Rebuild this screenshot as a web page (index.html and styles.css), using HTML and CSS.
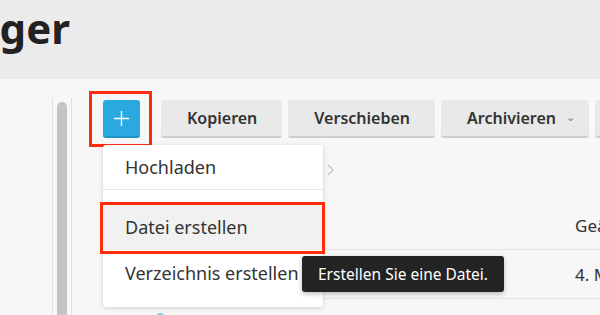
FILE: index.html
```html
<!DOCTYPE html>
<html lang="de">
<head>
    <meta charset="UTF-8">
    <title>Dateimanager</title>
    <link rel="stylesheet" href="styles.css">
</head>
<body>
    <header class="page-header">
        <div class="title-clip">
            <h1>File Manager</h1>
        </div>
    </header>

    <main class="page-main">
        <div class="gutter"></div>
        <div class="scroll-track">
            <div class="scroll-thumb"></div>
        </div>

        <section class="content">
            <div class="toolbar">
                <button class="btn-add" aria-label="Neu">
                    <svg width="17" height="17" viewBox="0 0 17 17">
                        <path d="M8.5 1v15M1 8.5h15" stroke="#fff" stroke-width="1.4" fill="none"/>
                    </svg>
                </button>
                <button class="btn">Kopieren</button>
                <button class="btn">Verschieben</button>
                <button class="btn btn-caret">Archivieren <span class="caret">&#8964;</span></button>
                <button class="btn">Löschen</button>
            </div>

            <nav class="breadcrumb">
                <span class="crumb">Meine Dateien</span>
                <svg class="chevron" width="7" height="12" viewBox="0 0 7 12">
                    <path d="M1 1l5 5-5 5" stroke="#c4c4c4" stroke-width="1.2" fill="none"/>
                </svg>
            </nav>

            <div class="file-table">
                <div class="row head">
                    <div class="cell"></div>
                    <div class="cell">Name</div>
                    <div class="cell">Geändert</div>
                </div>
                <div class="row">
                    <div class="cell"></div>
                    <div class="cell">Dokumente</div>
                    <div class="cell">4. März 2021</div>
                </div>
                <div class="row next">
                    <div class="cell"></div>
                    <div class="cell">
                        <svg class="folder" width="16" height="13" viewBox="0 0 16 13">
                            <path d="M0 1.5A1.5 1.5 0 0 1 1.5 0h4l1.5 2h7.5A1.5 1.5 0 0 1 16 3.5v8A1.5 1.5 0 0 1 14.5 13h-13A1.5 1.5 0 0 1 0 11.5z" fill="#8ccfeb"/>
                        </svg>
                    </div>
                    <div class="cell"></div>
                </div>
            </div>

            <div class="mark mark-add"></div>

            <ul class="dropdown">
                <li class="dropdown-item first">Hochladen</li>
                <li class="dropdown-group">
                    <div class="dropdown-item active">
                        Datei erstellen
                        <span class="mark mark-item"></span>
                    </div>
                    <div class="dropdown-item">Verzeichnis erstellen</div>
                </li>
            </ul>

            <div class="tooltip">Erstellen Sie eine Datei.</div>
        </section>
    </main>
</body>
</html>
```

FILE: styles.css
```css
* {
    margin: 0;
    padding: 0;
    box-sizing: border-box;
}

html, body {
    width: 600px;
    height: 315px;
    overflow: hidden;
}

body {
    font-family: 'Noto Sans', 'Open Sans', sans-serif;
    color: #333;
    background: #f7f7f7;
    display: flex;
    flex-direction: column;
}

/* header */
.page-header {
    height: 79px;
    flex-shrink: 0;
    background: #ebebeb;
    padding-top: 2px;
}

.title-clip {
    width: 70px;
    overflow: hidden;
    display: flex;
    justify-content: flex-end;
}

.title-clip h1 {
    font-size: 42px;
    font-weight: 700;
    line-height: 52px;
    white-space: nowrap;
    color: #222;
}

/* main area */
.page-main {
    flex: 1;
    display: flex;
}

.gutter {
    width: 52px;
    flex-shrink: 0;
}

.scroll-track {
    width: 20px;
    flex-shrink: 0;
    margin-top: 19px;
    border-left: 1px solid #e2e2e2;
    border-right: 1px solid #e2e2e2;
    padding: 4px 4px 0;
}

.scroll-thumb {
    height: 100%;
    background: #c4c4c4;
    border-radius: 5px 5px 0 0;
}

.content {
    position: relative;
    flex: 1;
    margin-left: 31px;
    padding-top: 21px;
}

/* toolbar */
.toolbar {
    display: flex;
    gap: 6px;
    white-space: nowrap;
}

.btn-add {
    width: 37px;
    height: 38px;
    margin-right: 15px;
    flex-shrink: 0;
    border: none;
    border-bottom: 2px solid #1f93c6;
    border-radius: 3px;
    background: #29a9e0;
    display: flex;
    align-items: center;
    justify-content: center;
}

.btn {
    height: 38px;
    flex-shrink: 0;
    padding: 0 25px 0 26px;
    border: none;
    border-bottom: 2px solid #cdcdcd;
    border-radius: 3px;
    background: #e9e9e9;
    font-family: inherit;
    font-size: 16px;
    font-weight: 600;
    color: #333;
}

.btn-caret {
    padding-right: 14px;
}

.caret {
    display: inline-block;
    margin-left: 6px;
    font-size: 11px;
    font-weight: 400;
    color: #777;
    vertical-align: 3px;
}

/* breadcrumb */
.breadcrumb {
    height: 30px;
    margin-top: 17px;
    display: flex;
    align-items: center;
    gap: 10px;
    padding-left: 112px;
    font-size: 15px;
    color: #666;
}

/* table */
.file-table {
    margin-top: 15px;
    width: 640px;
}

.row {
    display: grid;
    grid-template-columns: 54px 418px 168px;
    align-items: center;
    height: 49px;
    border-bottom: 1px solid #e4e4e4;
    font-size: 17px;
    white-space: nowrap;
}

.row.head {
    height: 50px;
    padding-top: 2px;
}

.row .cell {
    display: flex;
    align-items: center;
    gap: 10px;
}

.row.next {
    align-items: start;
    padding-top: 14px;
}

/* dropdown */
.dropdown {
    position: absolute;
    left: 0;
    top: 66px;
    width: 220px;
    list-style: none;
    background: #fff;
    border-radius: 3px;
    box-shadow: 0 1px 5px rgba(0, 0, 0, 0.16);
    font-size: 18px;
    color: #333;
}

.dropdown-item {
    position: relative;
    height: 46px;
    padding-left: 22px;
    display: flex;
    align-items: center;
    white-space: nowrap;
}

.dropdown-item.first {
    height: 45px;
    border-bottom: 1px solid #e6e6e6;
}

.dropdown-group {
    padding: 14px 0 11px;
}

.dropdown-item.active {
    background: #f1f1f1;
}

/* annotations */
.mark {
    position: absolute;
    border: 3px solid #ff2b0e;
    pointer-events: none;
}

.mark-add {
    left: -14px;
    top: 12px;
    width: 63px;
    height: 56px;
}

.mark-item {
    left: -3px;
    right: -2px;
    top: -2px;
    bottom: -4px;
}

/* tooltip */
.tooltip {
    position: absolute;
    left: 199px;
    top: 177px;
    height: 36px;
    padding: 0 16px;
    line-height: 36px;
    background: #232323;
    color: #fff;
    font-size: 15.5px;
    border-radius: 3px;
    box-shadow: 0 2px 5px rgba(0, 0, 0, 0.25);
    white-space: nowrap;
}
```
